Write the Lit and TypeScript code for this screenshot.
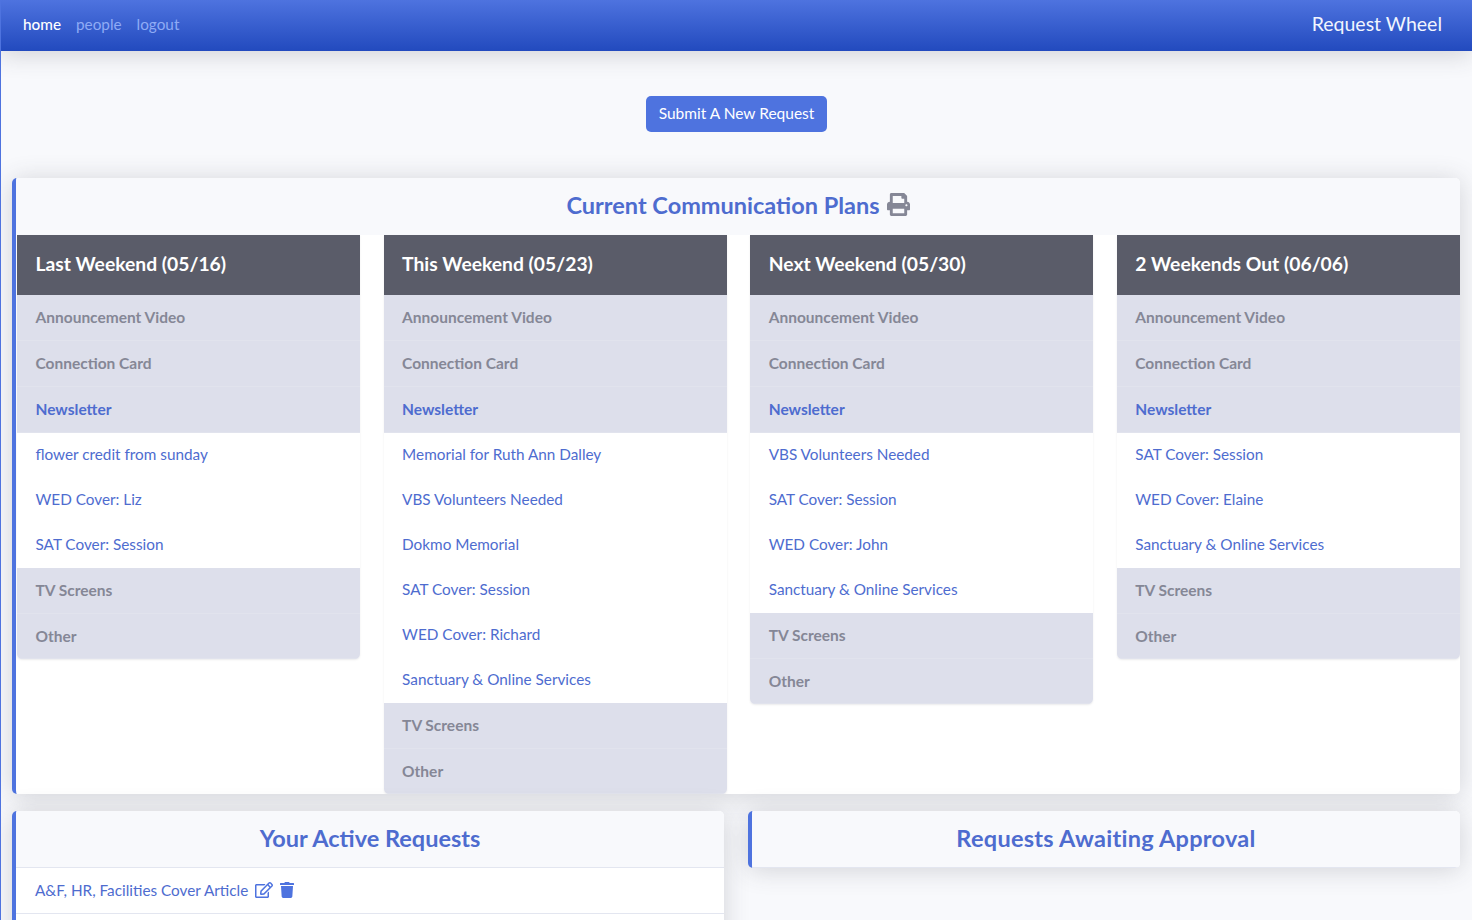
import { LitElement, css, html, svg } from 'lit'
import { customElement } from 'lit/decorators.js'

type Item = { label: string; kind: 'gray' | 'hot' | 'link' }
type Week = { title: string; items: string[] }

const printIcon = svg`<path d="M448 192V77.25c0-8.49-3.37-16.62-9.37-22.63L393.37 9.37c-6-6-14.14-9.37-22.63-9.37H96C78.33 0 64 14.33 64 32v160c-35.35 0-64 28.65-64 64v112c0 8.84 7.16 16 16 16h48v96c0 17.67 14.33 32 32 32h320c17.67 0 32-14.33 32-32v-96h48c8.84 0 16-7.16 16-16V256c0-35.35-28.65-64-64-64zm-64 256H128v-96h256v96zm0-224H128V64h192v48c0 8.84 7.16 16 16 16h48v96zm48 72c-13.25 0-24-10.75-24-24 0-13.26 10.75-24 24-24s24 10.74 24 24c0 13.25-10.75 24-24 24z"/>`
const editIcon = svg`<path d="M402.3 344.9l32-32c5-5 13.7-1.5 13.7 5.7V464c0 26.5-21.5 48-48 48H48c-26.5 0-48-21.5-48-48V112c0-26.5 21.5-48 48-48h273.5c7.1 0 10.7 8.6 5.7 13.7l-32 32c-1.5 1.5-3.5 2.3-5.7 2.3H48v352h352V350.5c0-2.1.8-4.1 2.3-5.6zm156.6-201.8L296.3 405.7l-90.4 10c-26.2 2.9-48.5-19.2-45.6-45.6l10-90.4L432.9 17.1c22.9-22.9 59.9-22.9 82.7 0l43.2 43.2c22.9 22.9 22.9 60 .1 82.8zM460.1 174L402 115.9 216.2 301.8l-7.3 65.3 65.3-7.3L460.1 174zm64.8-79.7l-43.2-43.2c-4.1-4.1-10.8-4.1-14.8 0L436 82l58.1 58.1 30.9-30.9c4-4.2 4-10.8-.1-14.9z"/>`
const trashIcon = svg`<path d="M432 32H312l-9.4-18.7A24 24 0 0 0 281.1 0H166.8a23.72 23.72 0 0 0-21.4 13.3L136 32H16A16 16 0 0 0 0 48v32a16 16 0 0 0 16 16h416a16 16 0 0 0 16-16V48a16 16 0 0 0-16-16zM53.2 467a48 48 0 0 0 47.9 45h245.8a48 48 0 0 0 47.9-45L416 128H32z"/>`

const weeks: Week[] = [
  { title: 'Last Weekend (05/16)', items: ['flower credit from sunday', 'WED Cover: Liz', 'SAT Cover: Session'] },
  { title: 'This Weekend (05/23)', items: ['Memorial for Ruth Ann Dalley', 'VBS Volunteers Needed', 'Dokmo Memorial', 'SAT Cover: Session', 'WED Cover: Richard', 'Sanctuary & Online Services'] },
  { title: 'Next Weekend (05/30)', items: ['VBS Volunteers Needed', 'SAT Cover: Session', 'WED Cover: John', 'Sanctuary & Online Services'] },
  { title: '2 Weekends Out (06/06)', items: ['SAT Cover: Session', 'WED Cover: Elaine', 'Sanctuary & Online Services'] },
]

const rows = (w: Week): Item[] => [
  { label: 'Announcement Video', kind: 'gray' },
  { label: 'Connection Card', kind: 'gray' },
  { label: 'Newsletter', kind: 'hot' },
  ...w.items.map((label) => ({ label, kind: 'link' as const })),
  { label: 'TV Screens', kind: 'gray' },
  { label: 'Other', kind: 'gray' },
]

@customElement('app-root')
export class AppRoot extends LitElement {
  static styles = css`
    :host {
      display: block;
      height: 920px;
      overflow: hidden;
      background: #f8f9fc;
      border-left: 1px solid #4e73df;
      box-sizing: border-box;
      font-family: 'Lato', 'Noto Sans', sans-serif;
      color: #858796;
    }
    * { box-sizing: border-box; }
    .topbar {
      position: relative;
      display: flex;
      align-items: center;
      justify-content: space-between;
      height: 51px;
      margin-left: -1px;
      padding: 0 30px 4px 23px;
      background: linear-gradient(180deg, #4e73df 0%, #224abe 100%);
      box-shadow: 0 4px 24px rgba(58, 59, 69, 0.2);
    }
    .nav { display: flex; gap: 15px; font-size: 15.3px; }
    .nav a { color: #8fabf5; }
    .nav a.active { color: #fff; font-weight: 500; }
    .brand { color: #f1f5fe; font-size: 19.5px; }
    .action { display: flex; justify-content: center; padding: 45px 0 46px; }
    .btn {
      display: flex;
      align-items: center;
      height: 36px;
      padding: 0 12.5px 2px;
      border-radius: 5px;
      background: #4e73df;
      color: #fff;
      font-size: 15.5px;
    }
    .content { padding: 0 12px 0 11px; }
    .card {
      background: #fff;
      border-left: 4px solid #4e73df;
      border-radius: 5px;
      box-shadow: 0 2px 26px rgba(58, 59, 69, 0.2);
      overflow: hidden;
    }
    .head {
      display: flex;
      align-items: center;
      justify-content: center;
      gap: 7px;
      height: 57px;
      padding-bottom: 4px;
      background: #f8f9fc;
      color: #4e6ccf;
      font-size: 23.5px;
      font-weight: 700;
    }
    .head.wide { letter-spacing: 0.27px; }
    .head svg { width: 23px; height: 23px; fill: #858796; }
    .weeks {
      display: grid;
      grid-template-columns: repeat(4, 1fr);
      gap: 23.4px;
      align-items: start;
      padding-left: 1px;
    }
    .week {
      border-radius: 0 0 5px 5px;
      overflow: hidden;
      box-shadow: 0 1px 2px rgba(58, 59, 69, 0.1);
    }
    .week-title {
      display: flex;
      align-items: center;
      height: 60px;
      padding: 0 18.5px 4px;
      background: #5a5c69;
      color: #fff;
      font-size: 19.3px;
      font-weight: 700;
    }
    .row {
      display: flex;
      align-items: center;
      height: 45px;
      padding: 0 18.5px 2px;
      font-size: 15.3px;
      color: #4e6ccf;
    }
    .row.gray, .row.hot {
      height: 45.9px;
      background: #dddfeb;
      font-size: 15.5px;
      font-weight: 700;
      box-shadow: inset 0 -1px 0 #e1e3ed;
    }
    .row.gray { color: #858796; }
    .split {
      display: grid;
      grid-template-columns: 712px 712px;
      gap: 24px;
      margin-top: 16.5px;
      align-items: start;
    }
    .split .head { padding-bottom: 2px; border-bottom: 1px solid #e3e6f0; }
    .request {
      display: flex;
      align-items: center;
      gap: 7px;
      height: 46px;
      padding: 0 19px;
      color: #4e6ccf;
      font-size: 15.3px;
      border-bottom: 1px solid #e3e6f0;
    }
    .request svg { height: 16px; fill: #4e73df; }
  `

  render() {
    return html`
      <header class="topbar">
        <nav class="nav">
          <a class="active">home</a>
          <a>people</a>
          <a>logout</a>
        </nav>
        <div class="brand">Request Wheel</div>
      </header>
      <div class="action"><div class="btn">Submit A New Request</div></div>
      <main class="content">
        <section class="card">
          <div class="head">
            Current Communication Plans
            <svg viewBox="0 0 512 512">${printIcon}</svg>
          </div>
          <div class="weeks">
            ${weeks.map(
              (w) => html`
                <div class="week">
                  <div class="week-title">${w.title}</div>
                  ${rows(w).map((r) => html`<div class="row ${r.kind}">${r.label}</div>`)}
                </div>
              `,
            )}
          </div>
        </section>
        <div class="split">
          <section class="card">
            <div class="head">Your Active Requests</div>
            <div class="request">
              A&amp;F, HR, Facilities Cover Article
              <svg viewBox="0 0 576 512">${editIcon}</svg>
              <svg viewBox="0 0 448 512">${trashIcon}</svg>
            </div>
            <div class="request"></div>
          </section>
          <section class="card">
            <div class="head wide">Requests Awaiting Approval</div>
          </section>
        </div>
      </main>
    `
  }
}

declare global {
  interface HTMLElementTagNameMap {
    'app-root': AppRoot
  }
}
